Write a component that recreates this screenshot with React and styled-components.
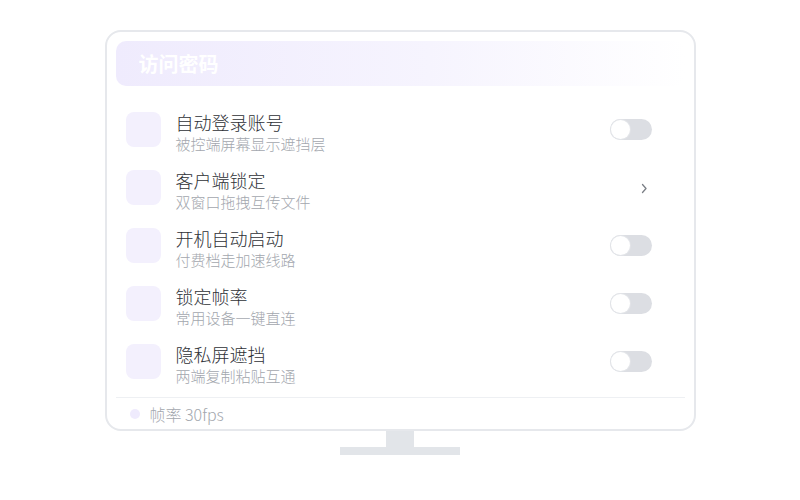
import React from 'react';
import styled, { createGlobalStyle } from 'styled-components';

const GlobalStyle = createGlobalStyle`
  html, body {
    margin: 0;
    padding: 0;
    background: #ffffff;
    font-family: "Noto Sans CJK SC", "Noto Sans", sans-serif;
  }
`;

const Page = styled.main`
  width: 800px;
  height: 500px;
  display: flex;
  flex-direction: column;
  align-items: center;
  padding-top: 30px;
  box-sizing: border-box;
`;

const Screen = styled.section`
  width: 591px;
  height: 401px;
  box-sizing: border-box;
  border: 2px solid #e6e8ec;
  border-radius: 16px;
  padding: 9px 9px 0;
  display: flex;
  flex-direction: column;
  overflow: hidden;
`;

const Header = styled.div`
  height: 45px;
  border-radius: 10px;
  background: linear-gradient(90deg, #efebfd 0%, #f6f4fe 55%, #ffffff 100%);
  display: flex;
  align-items: center;
  padding-left: 23px;
  color: #ffffff;
  font-size: 20px;
  font-weight: 700;
  flex-shrink: 0;
`;

const List = styled.div`
  margin-top: 15px;
  display: flex;
  flex-direction: column;
`;

const Row = styled.div`
  height: 58px;
  display: flex;
  align-items: flex-start;
  padding: 0 33px 0 10px;
`;

const IconBox = styled.div`
  width: 35px;
  height: 35px;
  margin-top: 11px;
  border-radius: 8px;
  background: #f3f0fd;
  flex-shrink: 0;
`;

const Texts = styled.div`
  margin-left: 15px;
  padding-top: 9px;
  flex: 1;
  display: flex;
  flex-direction: column;
`;

const Title = styled.div`
  font-size: 18px;
  line-height: 24px;
  font-weight: 300;
  color: #2e3136;
`;

const Sub = styled.div`
  font-size: 15px;
  line-height: 19px;
  font-weight: 300;
  color: #a3a7ae;
`;

const Toggle = styled.div`
  width: 42px;
  height: 21px;
  margin-top: 18px;
  border-radius: 11px;
  background: #dcdee3;
  position: relative;
  flex-shrink: 0;

  &::after {
    content: '';
    position: absolute;
    left: 1px;
    top: 1px;
    width: 19px;
    height: 19px;
    border-radius: 50%;
    background: #ffffff;
    box-shadow: 0 0 0 1px #e3e5e9;
  }
`;

const Chevron = styled.svg`
  margin-top: 24px;
  margin-right: 4px;
  flex-shrink: 0;
`;

const Divider = styled.div`
  height: 1px;
  background: #eef0f3;
  margin-top: 6px;
`;

const Footer = styled.div`
  height: 31px;
  display: flex;
  align-items: center;
  padding-left: 14px;
  gap: 10px;
  font-size: 16px;
  font-weight: 300;
  color: #a3a7ae;
`;

const Dot = styled.span`
  width: 10px;
  height: 10px;
  border-radius: 50%;
  background: #efebfd;
`;

const Neck = styled.div`
  width: 28px;
  height: 16px;
  background: #e2e5e9;
`;

const Base = styled.div`
  width: 120px;
  height: 8px;
  background: #e2e5e9;
`;

const items = [
  { title: '自动登录账号', sub: '被控端屏幕显示遮挡层', kind: 'toggle' },
  { title: '客户端锁定', sub: '双窗口拖拽互传文件', kind: 'link' },
  { title: '开机自动启动', sub: '付费档走加速线路', kind: 'toggle' },
  { title: '锁定帧率', sub: '常用设备一键直连', kind: 'toggle' },
  { title: '隐私屏遮挡', sub: '两端复制粘贴互通', kind: 'toggle' },
];

export default function App() {
  return (
    <Page>
      <GlobalStyle />
      <Screen>
        <Header>访问密码</Header>
        <List>
          {items.map((item) => (
            <Row key={item.title}>
              <IconBox />
              <Texts>
                <Title>{item.title}</Title>
                <Sub>{item.sub}</Sub>
              </Texts>
              {item.kind === 'toggle' ? (
                <Toggle />
              ) : (
                <Chevron width="7" height="11" viewBox="0 0 7 11">
                  <path d="M1.5 1.5 L5 5.5 L1.5 9.5" fill="none" stroke="#7b7f86" strokeWidth="1.3" strokeLinecap="round" strokeLinejoin="round" />
                </Chevron>
              )}
            </Row>
          ))}
        </List>
        <Divider />
        <Footer>
          <Dot />
          <span>帧率 30fps</span>
        </Footer>
      </Screen>
      <Neck />
      <Base />
    </Page>
  );
}
